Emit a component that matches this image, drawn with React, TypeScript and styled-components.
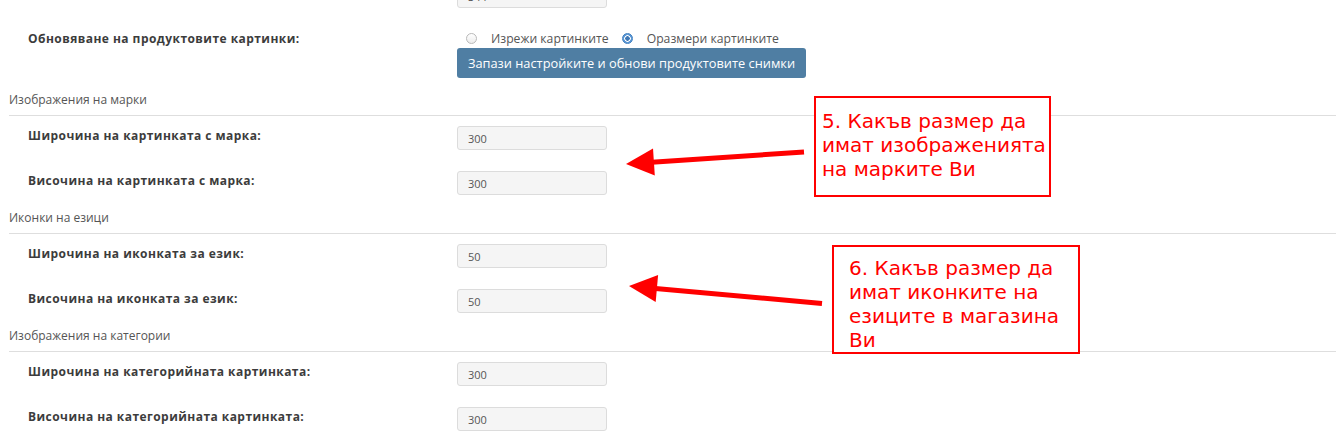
import React from "react";
import styled, { createGlobalStyle } from "styled-components";

const GlobalStyle = createGlobalStyle`
  html, body { margin: 0; padding: 0; background: #fff; }
  body { font-family: "Open Sans", "Liberation Sans", sans-serif; overflow: hidden; }
  * { box-sizing: border-box; }
`;

const Page = styled.div`
  position: relative;
  width: 1336px;
  height: 437px;
  overflow: hidden;
`;

const Scroll = styled.div`
  margin-top: -26px;
  padding-left: 9px;
`;

const SectionHeader = styled.div`
  padding: 3px 0 6px;
  line-height: 18px;
  font-size: 12px;
  color: #555;
  border-bottom: 1px solid #dedede;
`;

const Row = styled.div<{ $tight?: boolean }>`
  display: grid;
  grid-template-columns: 429px 1fr;
  padding: 10px 0 ${(p) => (p.$tight ? "10px" : "11px")} 19px;
`;

const Label = styled.div`
  font-size: 12px;
  font-weight: 700;
  line-height: 20px;
  color: #3c3c3c;
  letter-spacing: 0.45px;
`;

const Controls = styled.div`
  display: flex;
  flex-direction: column;
  align-items: flex-start;
`;

const TextInput = styled.input`
  width: 150px;
  height: 24px;
  padding: 0 10px;
  border: 1px solid #dcdcdc;
  border-radius: 3px;
  background: #f5f5f5;
  font-family: "Open Sans", "Liberation Sans", sans-serif;
  font-size: 11px;
  color: #555;
  outline: none;
`;

const RadioLine = styled.div`
  display: flex;
  align-items: center;
  height: 19px;
  padding-left: 9px;
  font-size: 12.2px;
  color: #555;
`;

const RadioOption = styled.label`
  display: flex;
  align-items: center;
  gap: 14px;
  margin-right: 13px;
`;

const RadioDot = styled.span<{ $checked?: boolean }>`
  width: 11px;
  height: 11px;
  border-radius: 50%;
  flex: none;
  ${(p) =>
    p.$checked
      ? `background: radial-gradient(circle, #3f78b5 0 2px, #ffffff 2.5px 3px, #5d99d6 3.5px);
         border: 1px solid #3f7fc0;`
      : `background: linear-gradient(#ffffff, #ececec);
         border: 1px solid #b9b9b9;`}
`;

const Button = styled.button`
  height: 30px;
  padding: 0 11px;
  border: none;
  border-radius: 3px;
  background: #4f7ea3;
  color: #fff;
  font-family: "Open Sans", "Liberation Sans", sans-serif;
  font-size: 12.8px;
  cursor: pointer;
`;

const Note = styled.div<{ $left: number; $top: number; $w: number; $h: number; $pl: number; $pt: number }>`
  position: absolute;
  left: ${(p) => p.$left}px;
  top: ${(p) => p.$top}px;
  width: ${(p) => p.$w}px;
  height: ${(p) => p.$h}px;
  padding: ${(p) => p.$pt}px 0 0 ${(p) => p.$pl}px;
  border: 2px solid #ff0000;
  background: #fff;
  color: #ff0000;
  font-family: "DejaVu Sans", sans-serif;
  font-size: 20px;
  line-height: 24px;
  white-space: nowrap;
`;

const Arrows = styled.svg`
  position: absolute;
  left: 0;
  top: 0;
  pointer-events: none;
`;

type Field = { label: string; value: string };

const sections: { title: string; fields: Field[] }[] = [
  {
    title: "Изображения на марки",
    fields: [
      { label: "Широчина на картинката с марка:", value: "300" },
      { label: "Височина на картинката с марка:", value: "300" },
    ],
  },
  {
    title: "Иконки на езици",
    fields: [
      { label: "Широчина на иконката за език:", value: "50" },
      { label: "Височина на иконката за език:", value: "50" },
    ],
  },
  {
    title: "Изображения на категории",
    fields: [
      { label: "Широчина на категорийната картинката:", value: "300" },
      { label: "Височина на категорийната картинката:", value: "300" },
    ],
  },
];

export default function App() {
  return (
    <>
      <GlobalStyle />
      <Page>
        <Scroll>
          <Row>
            <Label />
            <Controls>
              <TextInput defaultValue="344" readOnly />
            </Controls>
          </Row>
          <Row $tight>
            <Label>Обновяване на продуктовите картинки:</Label>
            <Controls>
              <RadioLine>
                <RadioOption>
                  <RadioDot />
                  Изрежи картинките
                </RadioOption>
                <RadioOption>
                  <RadioDot $checked />
                  Оразмери картинките
                </RadioOption>
              </RadioLine>
              <Button>Запази настройките и обнови продуктовите снимки</Button>
            </Controls>
          </Row>
          {sections.map((s) => (
            <React.Fragment key={s.title}>
              <SectionHeader>{s.title}</SectionHeader>
              {s.fields.map((f) => (
                <Row key={f.label}>
                  <Label>{f.label}</Label>
                  <Controls>
                    <TextInput defaultValue={f.value} readOnly />
                  </Controls>
                </Row>
              ))}
            </React.Fragment>
          ))}
        </Scroll>

        <Arrows width="1336" height="437" viewBox="0 0 1336 437">
          <line x1="804" y1="152" x2="648" y2="162.5" stroke="#ff0000" strokeWidth="5" />
          <polygon points="626,164 653,148.6 654.8,175.6" fill="#ff0000" />
          <line x1="822" y1="303.5" x2="650" y2="288" stroke="#ff0000" strokeWidth="5" />
          <polygon points="629,286 658.1,275 655.7,302" fill="#ff0000" />
        </Arrows>

        <Note $left={814} $top={96} $w={237} $h={101} $pl={6} $pt={11}>
          5. Какъв размер да
          <br />
          имат изображенията
          <br />
          на марките Ви
        </Note>
        <Note $left={832} $top={245} $w={248} $h={109} $pl={15} $pt={9}>
          6. Какъв размер да
          <br />
          имат иконките на
          <br />
          езиците в магазина
          <br />
          Ви
        </Note>
      </Page>
    </>
  );
}
